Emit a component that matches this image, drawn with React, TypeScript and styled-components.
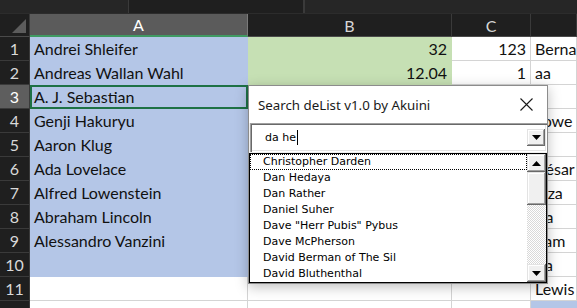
import { Fragment } from "react";
import styled, { createGlobalStyle } from "styled-components";

const GlobalStyle = createGlobalStyle`
  html, body {
    margin: 0;
    padding: 0;
    background: #ffffff;
    overflow: hidden;
  }
  #root {
    width: 577px;
    height: 308px;
    position: relative;
    overflow: hidden;
  }
`;

const Page = styled.div`
  display: flex;
  flex-direction: column;
  width: 577px;
  height: 308px;
  overflow: hidden;
`;

const FormulaBar = styled.div`
  height: 14px;
  flex-shrink: 0;
  display: flex;
  background: #1b1b1b;
  border-bottom: 1px solid #2c2c2c;
  box-sizing: border-box;
`;

const NameBox = styled.div`
  width: 128px;
  background: #262626;
  border-right: 1px solid #3a3a3a;
`;

const FxArea = styled.div`
  width: 174px;
  background: #1f1f1f;
  border-right: 2px solid #3a3a3a;
`;

const FormulaInput = styled.div`
  flex: 1;
  background: #262626;
`;

const Sheet = styled.div`
  flex-shrink: 0;
  display: grid;
  grid-template-columns: 30px 218px 204px 79px 46px;
  grid-template-rows: 23px;
  grid-auto-rows: 24px;
  font-family: Lato, "Open Sans", sans-serif;
  font-size: 16px;
  color: #111;
`;

const Corner = styled.div`
  background: #1f1f1f;
  border-right: 1px solid #3a3a3a;
  border-bottom: 1px solid #4a4a4a;
  box-sizing: border-box;
  display: flex;
  align-items: flex-end;
  justify-content: flex-end;
  padding: 0 3px 3px 0;
`;

const CornerMark = styled.div`
  width: 0;
  height: 0;
  border-left: 14px solid transparent;
  border-bottom: 14px solid #5c5c5c;
`;

const ColHeader = styled.div<{ $active?: boolean }>`
  background: ${(p) => (p.$active ? "#5b5b5b" : "#1f1f1f")};
  color: ${(p) => (p.$active ? "#ffffff" : "#d6d6d6")};
  border-right: 1px solid ${(p) => (p.$active ? "#7a7a7a" : "#3a3a3a")};
  border-bottom: ${(p) => (p.$active ? "2px solid #3f9a62" : "1px solid #4a4a4a")};
  box-sizing: border-box;
  display: flex;
  align-items: center;
  justify-content: center;
  font-size: 16px;
`;

const RowHeader = styled.div<{ $active?: boolean }>`
  background: ${(p) => (p.$active ? "#5e5e5e" : "#1f1f1f")};
  color: ${(p) => (p.$active ? "#ffffff" : "#d9d9d9")};
  border-bottom: 1px solid #3a3a3a;
  border-right: 1px solid #3a3a3a;
  box-sizing: border-box;
  display: flex;
  align-items: center;
  justify-content: center;
  font-size: 16px;
`;

const Cell = styled.div<{ $fill?: string; $right?: boolean; $active?: boolean }>`
  position: relative;
  background: ${(p) => p.$fill || "#ffffff"};
  border-right: 1px solid ${(p) => (p.$fill ? p.$fill : "#d4d4d4")};
  border-bottom: 1px solid ${(p) => (p.$fill ? p.$fill : "#d4d4d4")};
  box-sizing: border-box;
  display: flex;
  align-items: center;
  justify-content: ${(p) => (p.$right ? "flex-end" : "flex-start")};
  padding: 0 4px;
  white-space: nowrap;
  overflow: hidden;
  outline: ${(p) => (p.$active ? "2px solid #1e7145" : "none")};
  outline-offset: -2px;
`;

const Dialog = styled.div`
  position: absolute;
  left: 248px;
  top: 85px;
  width: 300px;
  height: 199px;
  box-sizing: border-box;
  background: #f0f0f0;
  border: 1px solid #8c8c8c;
  box-shadow: 0 3px 12px rgba(0, 0, 0, 0.25);
  display: flex;
  flex-direction: column;
`;

const TitleBar = styled.div`
  height: 37px;
  flex-shrink: 0;
  background: #ffffff;
  display: flex;
  align-items: center;
  justify-content: space-between;
  padding: 0 14px 0 9px;
  font-family: "Noto Sans", "Open Sans", sans-serif;
  font-size: 13.3px;
  color: #1a1a1a;
`;

const Combo = styled.div`
  height: 29px;
  flex-shrink: 0;
  margin: 0 0 0 1px;
  box-sizing: border-box;
  background: #ffffff;
  box-shadow: inset 1px 1px #a0a0a0, inset 2px 2px #696969, inset -1px -1px #ffffff, inset -2px -2px #e3e3e3;
  display: flex;
  align-items: center;
  padding: 0 2px 0 15px;
  font-family: "DejaVu Sans", sans-serif;
  font-size: 11px;
  color: #000;
`;

const ComboText = styled.div`
  flex: 1;
  display: flex;
  align-items: center;
`;

const Caret = styled.span`
  display: inline-block;
  width: 1px;
  height: 15px;
  background: #000;
  margin-left: 1px;
`;

const ArrowButton = styled.div<{ $w?: number; $h?: number }>`
  width: ${(p) => p.$w || 18}px;
  height: ${(p) => p.$h || 17}px;
  flex-shrink: 0;
  box-sizing: border-box;
  background: #f0f0f0;
  box-shadow: inset -1px -1px #696969, inset 1px 1px #e3e3e3, inset -2px -2px #a0a0a0, inset 2px 2px #ffffff;
  display: flex;
  align-items: center;
  justify-content: center;
`;

const ListBox = styled.div`
  flex: 1;
  margin: 1px 0 0 0;
  border: 1px solid #000;
  background: #ffffff;
  display: flex;
  min-height: 0;
`;

const Items = styled.div`
  flex: 1;
  overflow: hidden;
  font-family: "DejaVu Sans", sans-serif;
  font-size: 11px;
  color: #000;
`;

const Item = styled.div<{ $focus?: boolean }>`
  height: 16px;
  line-height: 14px;
  padding-left: 12px;
  box-sizing: border-box;
  white-space: nowrap;
  border: 1px dotted ${(p) => (p.$focus ? "#000" : "transparent")};
`;

const ScrollBar = styled.div`
  width: 19px;
  display: flex;
  flex-direction: column;
`;

const Thumb = styled.div`
  height: 33px;
  box-sizing: border-box;
  background: #f0f0f0;
  box-shadow: inset -1px -1px #696969, inset 1px 1px #e3e3e3, inset -2px -2px #a0a0a0, inset 2px 2px #ffffff;
`;

const Track = styled.div`
  flex: 1;
  background: repeating-conic-gradient(#ffffff 0 25%, #d9d9d9 0 50%) 0 0 / 2px 2px;
`;

const Triangle = ({ up }: { up?: boolean }) => (
  <svg width="9" height="5" viewBox="0 0 9 5">
    <path d={up ? "M0 5 L4.5 0 L9 5 Z" : "M0 0 L9 0 L4.5 5 Z"} fill="#000" />
  </svg>
);

const CloseIcon = () => (
  <svg width="13" height="13" viewBox="0 0 13 13">
    <path d="M0.5 0.5 L12.5 12.5 M12.5 0.5 L0.5 12.5" stroke="#1a1a1a" strokeWidth="1.1" fill="none" />
  </svg>
);

const BLUE = "#b4c6e7";
const GREEN = "#c6e0b4";

const rows: [string, string, string, string][] = [
  ["Andrei Shleifer", "32", "123", "Berna"],
  ["Andreas Wallan Wahl", "12.04", "1", "aa"],
  ["A. J. Sebastian", "", "", "A"],
  ["Genji Hakuryu", "", "", "Lowe"],
  ["Aaron Klug", "", "", ""],
  ["Ada Lovelace", "", "", "César"],
  ["Alfred Lowenstein", "", "", "Oza"],
  ["Abraham Lincoln", "", "", "Ka"],
  ["Alessandro Vanzini", "", "", "Pam"],
  ["", "", "", "Ra"],
  ["", "", "", "Lewis"],
  ["", "", "", ""],
];

const results = [
  "Christopher Darden",
  "Dan Hedaya",
  "Dan Rather",
  "Daniel Suher",
  'Dave "Herr Pubis" Pybus',
  "Dave McPherson",
  "David Berman of The Sil",
  "David Bluthenthal",
];

export default function App() {
  return (
    <>
      <GlobalStyle />
      <Page>
        <FormulaBar>
          <NameBox />
          <FxArea />
          <FormulaInput />
        </FormulaBar>
        <Sheet>
          <Corner>
            <CornerMark />
          </Corner>
          <ColHeader $active>A</ColHeader>
          <ColHeader>B</ColHeader>
          <ColHeader>C</ColHeader>
          <ColHeader />
          {rows.map((r, i) => (
            <Fragment key={i}>
              <RowHeader $active={i === 2}>{i < 11 ? i + 1 : ""}</RowHeader>
              <Cell $fill={i < 10 ? BLUE : undefined} $active={i === 2}>
                {r[0]}
              </Cell>
              <Cell $fill={i < 2 ? GREEN : undefined} $right>
                {r[1]}
              </Cell>
              <Cell $right>{r[2]}</Cell>
              <Cell $fill={i === 11 ? BLUE : undefined}>{r[3]}</Cell>
            </Fragment>
          ))}
        </Sheet>
      </Page>

      <Dialog>
        <TitleBar>
          <span>Search deList v1.0 by Akuini</span>
          <CloseIcon />
        </TitleBar>
        <Combo>
          <ComboText>
            da he
            <Caret />
          </ComboText>
          <ArrowButton>
            <Triangle />
          </ArrowButton>
        </Combo>
        <ListBox>
          <Items>
            {results.map((name, i) => (
              <Item key={name} $focus={i === 0}>
                {name}
              </Item>
            ))}
          </Items>
          <ScrollBar>
            <ArrowButton $w={19} $h={18}>
              <Triangle up />
            </ArrowButton>
            <Thumb />
            <Track />
            <ArrowButton $w={19} $h={18}>
              <Triangle />
            </ArrowButton>
          </ScrollBar>
        </ListBox>
      </Dialog>
    </>
  );
}
